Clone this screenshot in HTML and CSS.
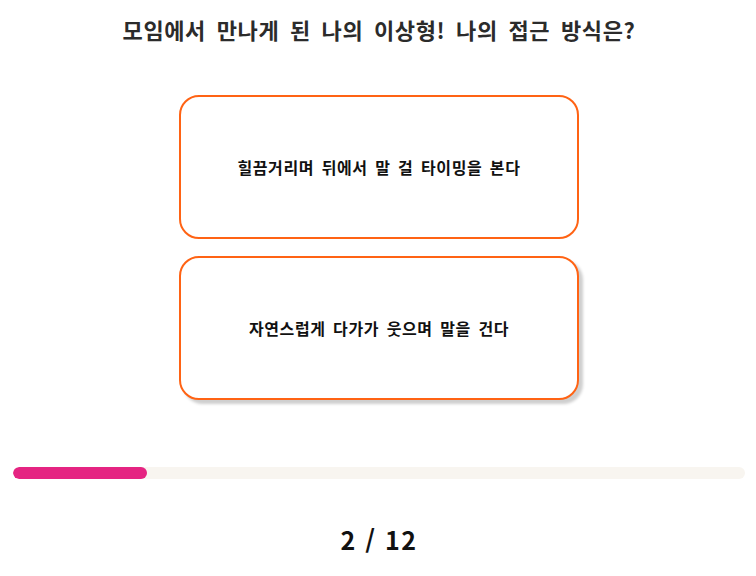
FILE: index.html
```html
<!DOCTYPE html>
<html lang="ko">
<head>
<meta charset="utf-8">
<title>Quiz</title>
<link rel="stylesheet" href="styles.css">
</head>
<body>
<main class="quiz">
  <h1 class="question">모임에서 만나게 된 나의 이상형! 나의 접근 방식은?</h1>
  <div class="options">
    <button class="option">힐끔거리며 뒤에서 말 걸 타이밍을 본다</button>
    <button class="option option-hover">자연스럽게 다가가 웃으며 말을 건다</button>
  </div>
  <div class="progress">
    <div class="progress-fill" style="width: 134px"></div>
  </div>
  <div class="counter">2 / 12</div>
</main>
</body>
</html>
```
FILE: styles.css
```css
* { box-sizing: border-box; }
html, body { margin: 0; padding: 0; background: #fff; }
body {
  font-family: "Noto Sans CJK KR", "Noto Sans", sans-serif;
  color: #222;
}
.quiz {
  display: flex;
  flex-direction: column;
  align-items: center;
  padding: 14px 11px 0 13px;
}
.question {
  margin: 0;
  font-size: 22px;
  line-height: 30px;
  font-weight: 700;
  letter-spacing: 0.6px;
  word-spacing: 4px;
  color: #2b2b2b;
  text-align: center;
}
.options {
  margin-top: 51px;
  display: flex;
  flex-direction: column;
  gap: 17px;
}
.option {
  width: 400px;
  height: 144px;
  padding-bottom: 2px;
  border: 2px solid #ff6314;
  border-radius: 20px;
  background: #fff;
  font-family: inherit;
  font-size: 16px;
  font-weight: 700;
  letter-spacing: 0.6px;
  word-spacing: 2.5px;
  color: #111;
  cursor: pointer;
}
.option-hover {
  box-shadow: 4px 4px 3px #cfcfcf;
}
.progress {
  margin-top: 67px;
  width: 100%;
  height: 12px;
  background: #f8f5f0;
  border-radius: 6px;
  overflow: hidden;
}
.progress-fill {
  height: 100%;
  background: #e52482;
  border-radius: 6px;
}
.counter {
  margin-top: 40px;
  font-size: 25px;
  line-height: 40px;
  font-weight: 700;
  letter-spacing: 1.5px;
  color: #111;
}
```
